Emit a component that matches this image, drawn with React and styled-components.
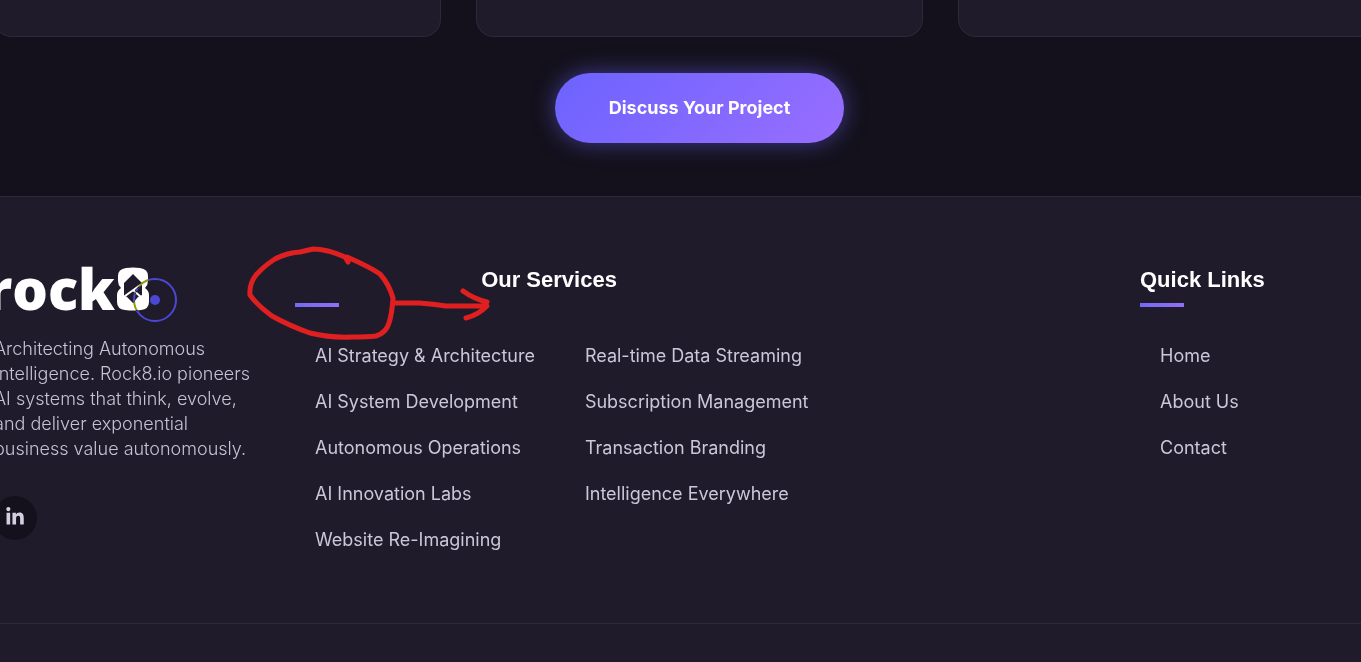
import React from "react";
import styled, { createGlobalStyle } from "styled-components";
import { FaLinkedinIn } from "react-icons/fa";

const GlobalStyle = createGlobalStyle`
  *, *::before, *::after { box-sizing: border-box; }
  body {
    margin: 0;
    min-height: 100vh;
    background: #14111c;
    color: #fff;
    font-family: Inter, "Liberation Sans", sans-serif;
    font-size: 18px;
    overflow: hidden;
  }
  ul { list-style: none; margin: 0; padding: 0; }
`;

const Page = styled.div`
  position: relative;
  overflow: hidden;
`;

/* The content is wider than the window and runs past both of its sides. */
const Bleed = styled.div`
  margin-left: -6px;
  margin-right: -44px;
`;

const Cards = styled(Bleed)`
  display: grid;
  grid-template-columns: repeat(3, 1fr);
  gap: 35px;
`;

const Card = styled.article`
  height: 37px;
  background: #1f1b2b;
  border: 1px solid #2d2938;
  border-top: 0;
  border-radius: 0 0 18px 18px;
`;

const CallToAction = styled(Bleed)`
  display: flex;
  justify-content: center;
  padding: 36px 0 53px;
`;

const PrimaryButton = styled.button`
  height: 70px;
  padding: 0 54px;
  border: 0;
  border-radius: 35px;
  color: #fff;
  background: linear-gradient(135deg, #6c63ff, #986eff);
  box-shadow: 0 0 22px rgba(108, 99, 255, 0.5);
  font: 700 18px/28px Inter, "Liberation Sans", sans-serif;
  white-space: nowrap;
`;

const Footer = styled.footer`
  min-height: 466px;
  background: #1f1b2b;
  border-top: 1px solid #2d2938;
`;

const FooterGrid = styled(Bleed)`
  display: grid;
  grid-template-columns: 266px 1fr 265px;
  gap: 35px;
  padding: 69px 0;
`;

const FooterBottom = styled.div`
  border-top: 1px solid #2d2938;
`;

const Column = styled.div`
  min-width: 0;
`;

const Logo = styled.a`
  display: flex;
  justify-content: flex-end;
  width: 155px;
  height: 46px;
  color: #fff;
  text-decoration: none;
  font: 800 56px/44px "Open Sans", sans-serif;
`;

const LogoMark = styled.svg`
  flex: none;
  width: 32px;
  height: 44px;
  margin: 1px 0 0 2px;
`;

const About = styled.p`
  margin: 24px 0 35px;
  color: #c6c1d4;
  font-weight: 300;
  line-height: 25px;
`;

const SocialLink = styled.a`
  display: flex;
  align-items: center;
  justify-content: center;
  width: 44px;
  height: 44px;
  margin-left: -1px;
  padding-bottom: 3px;
  border-radius: 50%;
  background: #14111c;
  color: #d3cee0;
`;

const Heading = styled.h3`
  position: relative;
  width: ${(p) => (p.$centered ? "508px" : "auto")};
  margin: 0 0 35px;
  padding-bottom: 13px;
  text-align: ${(p) => (p.$centered ? "center" : "left")};
  font: bold 22px/28px "Liberation Sans", Arial, sans-serif;

  &::after {
    content: "";
    position: absolute;
    left: 0;
    bottom: 0;
    width: 44px;
    height: 4px;
    background: linear-gradient(90deg, #7469f5, #9070f5);
  }
`;

const LinkColumns = styled.div`
  display: flex;
  gap: 50px;
  padding-left: 20px;
`;

const LinkList = styled.ul`
  display: flex;
  flex-direction: column;
  gap: 18px;
`;

const FooterLink = styled.a`
  display: block;
  color: #cbc6d8;
  line-height: 28px;
  text-decoration: none;
  white-space: nowrap;
`;

const CursorRing = styled.div`
  position: absolute;
  left: 133px;
  top: 278px;
  display: grid;
  place-items: center;
  width: 44px;
  height: 44px;
  border: 2px solid #6c63ff;
  border-radius: 50%;
  mix-blend-mode: difference;
  pointer-events: none;

  &::after {
    content: "";
    width: 10px;
    height: 10px;
    border-radius: 50%;
    background: #6c63ff;
  }
`;

const Annotation = styled.svg`
  position: absolute;
  left: 240px;
  top: 235px;
  width: 260px;
  height: 120px;
  pointer-events: none;
`;

const services = [
  [
    "AI Strategy & Architecture",
    "AI System Development",
    "Autonomous Operations",
    "AI Innovation Labs",
    "Website Re-Imagining",
  ],
  [
    "Real-time Data Streaming",
    "Subscription Management",
    "Transaction Branding",
    "Intelligence Everywhere",
  ],
];

const quickLinks = ["Home", "About Us", "Contact"];

function Links({ items }) {
  return (
    <LinkList>
      {items.map((item) => (
        <li key={item}>
          <FooterLink href="#">{item}</FooterLink>
        </li>
      ))}
    </LinkList>
  );
}

export default function App() {
  return (
    <Page>
      <GlobalStyle />
      <main>
        <Cards>
          <Card />
          <Card />
          <Card />
        </Cards>
        <CallToAction>
          <PrimaryButton type="button">Discuss Your Project</PrimaryButton>
        </CallToAction>
      </main>
      <Footer>
        <FooterGrid>
          <Column>
            <Logo href="#" aria-label="rock8">
              rock
              <LogoMark viewBox="0 0 32 44" aria-hidden="true">
                <path
                  fill="#fff"
                  d="M9 1Q16 0 23 1Q31 2 31 9V14Q31 18 28 21Q32 24 32 28V35Q32 42 24 43Q16 44 8 43Q0 42 0 35V28Q0 24 4 21Q1 18 1 14V9Q1 2 9 1Z"
                />
                <path fill="#1f1b2b" d="M16 7L25 16V28L21 30L16 36L10 30L7 28V16Z" />
                <path fill="none" stroke="#fff" strokeWidth="2" d="M8 29L26 16M16 23L24 30" />
              </LogoMark>
            </Logo>
            <About>
              Architecting Autonomous Intelligence. Rock8.io pioneers AI systems that think,
              evolve, and deliver exponential business value autonomously.
            </About>
            <SocialLink href="#" aria-label="LinkedIn">
              <FaLinkedinIn size={20} />
            </SocialLink>
          </Column>
          <Column>
            <Heading $centered>Our Services</Heading>
            <LinkColumns>
              {services.map((items) => (
                <Links key={items[0]} items={items} />
              ))}
            </LinkColumns>
          </Column>
          <Column>
            <Heading>Quick Links</Heading>
            <LinkColumns>
              <Links items={quickLinks} />
            </LinkColumns>
          </Column>
        </FooterGrid>
        <FooterBottom />
      </Footer>
      <CursorRing />
      <Annotation viewBox="0 0 260 120" aria-hidden="true">
        <g fill="none" stroke="#e02020" strokeWidth="5" strokeLinecap="round" strokeLinejoin="round">
          <path d="M108 27L105 22Q87 14 73 14L60 17Q46 18 35 24Q24 31 16 40Q9 49 10 60Q17 70 32 81Q50 91 70 98Q90 103 112 102Q128 102 136 101Q146 98 149 88Q152 79 153 63Q149 49 140 39Q130 32 107 22" />
          <path d="M155 68H179Q193 69 206 71H246M223 56Q234 64 247 67M226 83Q238 80 247 71" />
        </g>
      </Annotation>
    </Page>
  );
}
